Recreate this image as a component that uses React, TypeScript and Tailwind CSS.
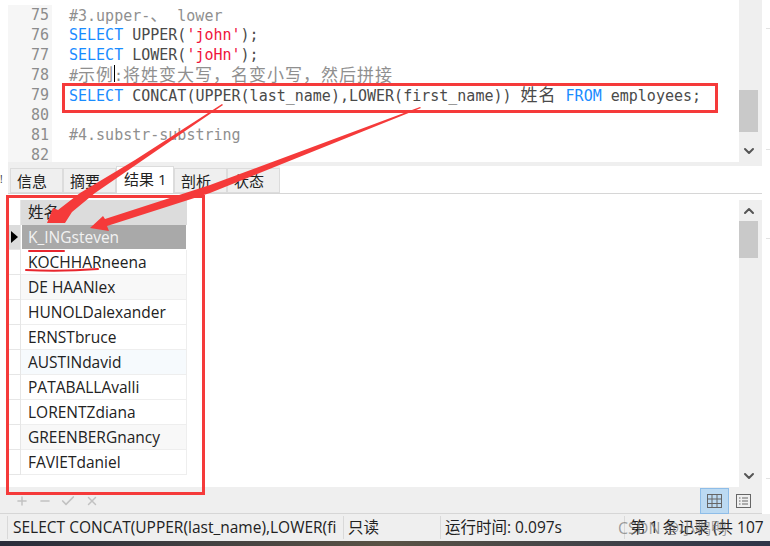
import { Check, ChevronDown, ChevronUp, Minus, Plus, X } from "lucide-react";

const mono = "font-['DejaVu_Sans_Mono','Noto_Sans_CJK_SC',monospace] text-[15px] leading-5 whitespace-pre";
const ui = "font-['Open_Sans','Noto_Sans_CJK_SC',sans-serif]";

const kw = "text-[#1a8cff]";
const cm = "text-[#8f8f8f]";
const st = "text-[#f0143c]";
const cjk = "text-[17px] leading-5 tracking-[1px]";

const rows = [
  "K_INGsteven",
  "KOCHHARneena",
  "DE HAANlex",
  "HUNOLDalexander",
  "ERNSTbruce",
  "AUSTINdavid",
  "PATABALLAvalli",
  "LORENTZdiana",
  "GREENBERGnancy",
  "FAVIETdaniel",
];

function CodeLine({ n, children }: { n: number; children?: React.ReactNode }) {
  return (
    <div className="flex h-5">
      <div className={`${mono} w-[44px] shrink-0 bg-[#f6f6f6] pr-[3px] text-right text-[#8c8c8c]`}>{n}</div>
      <div className={`${mono} pl-[17px] text-[#4a4a4a]`}>{children}</div>
    </div>
  );
}

function Tab({ label, active }: { label: string; active?: boolean }) {
  return (
    <div
      className={
        active
          ? `${ui} h-[27px] w-[58px] border border-b-0 border-[#dcdcdc] bg-white pl-[7px] text-[15px] leading-[24px] text-[#222]`
          : `${ui} h-[25px] w-[53px] border border-[#dcdcdc] bg-[#efefef] pl-[6px] text-[15px] leading-[24px] text-[#222]`
      }
    >
      {label}
    </div>
  );
}

export default function App() {
  return (
    <div className="relative h-[546px] w-[770px] overflow-hidden bg-white">
      <div className="flex h-[541px] flex-col">
        {/* editor */}
        <div className="flex h-[162px] shrink-0 pl-[8px] pr-[8px]">
          <div className="flex-1 overflow-hidden pt-[5px]">
            <CodeLine n={75}>
              <span className={cm}>#3.upper-<span className={cjk}>、</span> lower</span>
            </CodeLine>
            <CodeLine n={76}><span className={kw}>SELECT</span> UPPER(<span className={st}>'john'</span>);</CodeLine>
            <CodeLine n={77}><span className={kw}>SELECT</span> LOWER(<span className={st}>'joHn'</span>);</CodeLine>
            <CodeLine n={78}>
              <span className={cm}>#<span className={cjk}>示例</span>:<span className={cjk}>将姓变大写，名变小写，然后拼接</span></span>
            </CodeLine>
            <CodeLine n={79}>
              <span className={kw}>SELECT</span> CONCAT(UPPER(last_name),LOWER(first_name)) <span className={cjk}>姓名</span> <span className={kw}>FROM</span> employees;
            </CodeLine>
            <CodeLine n={80} />
            <CodeLine n={81}><span className={cm}>#4.substr-substring</span></CodeLine>
            <CodeLine n={82} />
          </div>
          <div className="flex w-[23px] shrink-0 flex-col bg-[#efefef] text-[#555]">
            <div className="mt-[90px] h-[42px] w-[19px] bg-[#c9c9c9]" />
            <div className="flex w-[19px] justify-center pt-[11px]">
              <ChevronDown size={16} strokeWidth={3} />
            </div>
          </div>
        </div>

        {/* tabs */}
        <div className="ml-[8px] mr-[8px] flex h-[32px] shrink-0 items-end border-b border-[#d6d6d6] bg-[#efefef] pl-[2px]">
          <Tab label="信息" />
          <Tab label="摘要" />
          <Tab label="结果 1" active />
          <Tab label="剖析" />
          <Tab label="状态" />
          <div className="h-[27px] flex-1 bg-white" />
        </div>

        {/* result grid */}
        <div className="flex h-[293px] shrink-0 bg-white pl-[8px] pr-[8px]">
          <div className="flex-1 pt-[6px]">
            <div className="flex h-[25px]">
              <div className="w-[13px] shrink-0 border-r border-[#e6e6e6] bg-white" />
              <div className={`${ui} w-[166px] bg-[#dcdcdc] pl-[7px] text-[15.5px] leading-[25px] text-[#222]`}>姓名</div>
            </div>
            {rows.map((r, i) => (
              <div key={r} className="flex h-[25px]">
                <div
                  className={`flex w-[13px] shrink-0 items-center justify-center border-r border-b border-[#e6e6e6] ${
                    i === 0 ? "bg-[#dcdcdc]" : "bg-white"
                  }`}
                >
                  {i === 0 && <div className="h-0 w-0 border-y-[6px] border-l-[7px] border-y-transparent border-l-black" />}
                </div>
                <div
                  className={`${ui} w-[166px] border-b text-[15.5px] leading-[24px] ${
                    i === 0
                      ? "border-x border-white bg-[#a9a9a9] pl-[6px] text-[#f2f2f2]"
                      : i === 5
                        ? "border-r border-[#eeeeee] bg-[#f6fafd] pl-[7px] text-[#222]"
                        : i === 2 || i === 8
                          ? "border-r border-[#eeeeee] bg-[#f8f8f8] pl-[7px] text-[#222]"
                          : "border-r border-[#eeeeee] bg-white pl-[7px] text-[#222]"
                  }`}
                >
                  {r}
                </div>
              </div>
            ))}
          </div>
          <div className="pt-[6px]">
            <div className="flex h-full w-[23px] flex-col bg-[#efefef] text-[#555]">
              <div className="flex h-[21px] w-[19px] justify-center pt-[3px]">
                <ChevronUp size={16} strokeWidth={3} />
              </div>
              <div className="h-[37px] w-[19px] bg-[#c9c9c9]" />
              <div className="mt-auto flex w-[19px] justify-center pb-[3px]">
                <ChevronDown size={16} strokeWidth={3} />
              </div>
            </div>
          </div>
        </div>

        {/* grid toolbar */}
        <div className="mr-[8px] flex h-[27px] shrink-0 items-center border-b border-[#d6d6d6] bg-[#efefef] pl-[15px] pr-[4px] pt-[1px] text-[#c2c2c2]">
          <Plus size={14} strokeWidth={2.5} />
          <Minus size={14} strokeWidth={2.5} className="ml-[9px]" />
          <Check size={16} strokeWidth={2.5} className="ml-[8px]" />
          <X size={14} strokeWidth={2.5} className="ml-[9px]" />
          <div className="ml-auto flex h-[26px] items-center">
            <div className="flex h-[26px] w-[29px] items-center justify-center border border-[#8ebde8] bg-[#bcdaf2]">
              <svg width="15" height="14" viewBox="0 0 15 14" fill="none" stroke="#666" strokeWidth="1">
                <rect x="0.5" y="0.5" width="14" height="13" />
                <path d="M5 .5v13M10 .5v13M.5 5h14M.5 9.5h14" />
              </svg>
            </div>
            <div className="flex h-[26px] w-[29px] items-center justify-center">
              <svg width="15" height="14" viewBox="0 0 15 14" fill="none" stroke="#666" strokeWidth="1">
                <rect x="0.5" y="0.5" width="14" height="13" />
                <path d="M3 4h1.5M6 4h6M3 7h1.5M6 7h6M3 10h1.5M6 10h6" />
              </svg>
            </div>
          </div>
        </div>

        {/* status bar */}
        <div className={`${ui} flex h-[27px] shrink-0 items-center overflow-hidden whitespace-nowrap bg-[#efefef] pl-[7px] text-[15.5px] text-[#222]`}>
          <div className="w-[336px] shrink-0 overflow-hidden border-l border-[#d9d9d9] pl-[5px]">SELECT CONCAT(UPPER(last_name),LOWER(fi</div>
          <div className="w-[97px] shrink-0 border-l border-[#d9d9d9] pl-[4px]">只读</div>
          <div className="w-[184px] shrink-0 border-l border-[#d9d9d9] pl-[4px]">运行时间: 0.097s</div>
          <div className="shrink-0 border-l border-[#d9d9d9] pl-[5px]">第 1 条记录 (共 107</div>
        </div>
      </div>

      {/* desktop showing under the window */}
      <div className="h-[5px] bg-gradient-to-r from-[#2a2c3a] via-[#5a5245] to-[#2f3448]" />

      {/* text caret in line 78 */}
      <div className="absolute left-[114px] top-[65px] h-[17px] w-px bg-black" />

      {/* cut off char at the left edge of the tabs */}
      <div className={`${ui} absolute left-0 top-[173px] text-[10px] leading-3 text-[#333]`}>!</div>

      {/* faint ticks from the window behind */}
      <div className="absolute left-[766px] top-[28px] h-px w-[4px] bg-[#e2e2e2]" />
      <div className="absolute left-[766px] top-[149px] h-px w-[4px] bg-[#e2e2e2]" />
      <div className="absolute left-[766px] top-[238px] h-px w-[4px] bg-[#e2e2e2]" />
      <div className="absolute left-[766px] top-[478px] h-px w-[4px] bg-[#e2e2e2]" />

      {/* watermark */}
      <div className={`${ui} absolute left-[618px] top-[516px] text-[16px] whitespace-nowrap text-[#777]/70`}>CSDN @小鸭鸭</div>

      {/* red annotations */}
      <div className="absolute left-[62px] top-[83px] h-[30px] w-[656px] border-[3px] border-[#f53a3a]" />
      <div className="absolute left-[6px] top-[195px] h-[300px] w-[199px] border-[3px] border-[#f53a3a]" />
      <svg className="absolute left-0 top-0" width="770" height="546" fill="#f53a3a" stroke="none">
        <polygon points="222,104 223,105 143,160 95,193 72,212 65,223 47,223 53,208 58,210 80,193 135,160" />
        <polygon points="420,107 421,108 210,193 107,226 109,231 90,228 103,216 105,219 210,185" />
        <path d="M29 251 H64" stroke="#e8262e" strokeWidth="2" fill="none" strokeLinecap="round" />
        <path d="M26 270 Q60 272 98 269" stroke="#e8262e" strokeWidth="2" fill="none" strokeLinecap="round" />
      </svg>
    </div>
  );
}
